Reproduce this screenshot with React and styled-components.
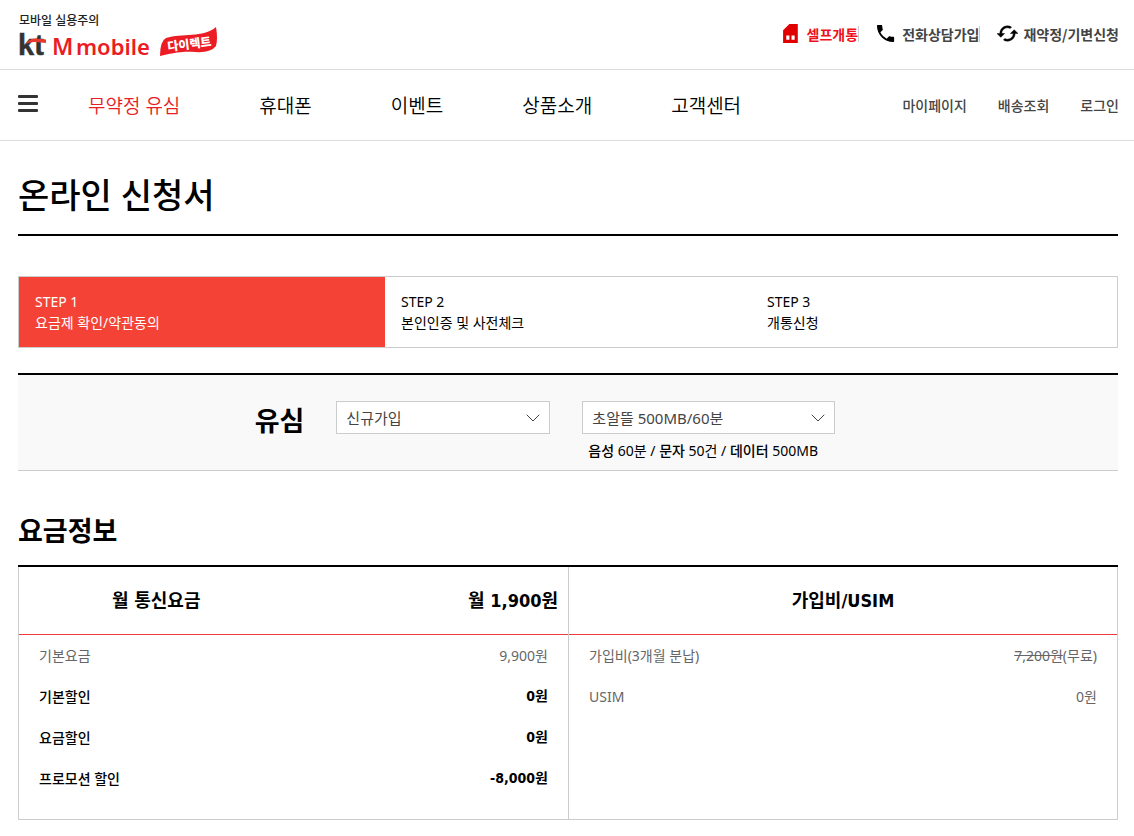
import React, { useState } from "react";
import styled, { createGlobalStyle } from "styled-components";
import { ChevronDown } from "lucide-react";
import { MdCached, MdPhone } from "react-icons/md";

const GlobalStyle = createGlobalStyle`
  * {
    box-sizing: border-box;
  }
  body {
    margin: 0;
    background: #fff;
    color: #000;
    font-family: "Noto Sans", "Noto Sans CJK KR", sans-serif;
    font-size: 14px;
    line-height: 21px;
  }
  a {
    color: inherit;
    text-decoration: none;
  }
`;

const Top = styled.div`
  display: flex;
  align-items: center;
  justify-content: space-between;
  height: 70px;
  padding: 0 15px 0 18px;
  border-bottom: 1px solid #ddd;
`;

const Logo = styled.svg`
  display: block;
  width: 202px;
  height: 60px;
  font-family: "Noto Sans", "Noto Sans CJK KR", sans-serif;
`;

const QuickLinks = styled.div`
  display: flex;
  gap: 17px;
  padding-bottom: 2px;
`;

const QuickLink = styled.a`
  display: flex;
  align-items: center;
  gap: 5px;
  color: ${(props) => (props.$red ? "#f0101c" : "#444")};
  font-family: "Noto Sans CJK KR", sans-serif;
  font-weight: 700;
  line-height: 16px;

  svg {
    width: 21px;
    height: 21px;
  }
  &:not(:last-child) span {
    border-right: 1px solid #ccc;
  }
`;

const Gnb = styled.nav`
  display: flex;
  align-items: center;
  height: 71px;
  padding: 0 15px 0 18px;
  border-bottom: 1px solid #ddd;
`;

const MenuButton = styled.button`
  display: grid;
  gap: 4px;
  width: 20px;
  margin-right: 50px;
  padding: 0 0 4px;
  border: 0;
  background: none;

  span {
    height: 3px;
    border-radius: 1px;
    background: #333;
  }
`;

const MainMenu = styled.div`
  display: flex;
  flex: 1;
  gap: 79px;
  padding-top: 2px;
  font-size: 19px;
  font-weight: 350;
  line-height: 28px;
`;

const MenuLink = styled.a`
  color: ${(props) => (props.$active ? "#e61e28" : "#000")};
`;

const UserMenu = styled.div`
  display: flex;
  gap: 31px;
  color: #444;
  font-family: "Noto Sans CJK KR", sans-serif;
  font-weight: 500;
`;

const Content = styled.main`
  padding: 32px 16px 16px 18px;
`;

const PageTitle = styled.h1`
  margin: 0 0 40px;
  padding-bottom: 17px;
  border-bottom: 2px solid #000;
  font-size: 34px;
  font-weight: 500;
  line-height: 44px;
`;

const Steps = styled.ol`
  display: grid;
  grid-template-columns: repeat(3, 1fr);
  margin: 0 0 25px;
  padding: 0;
  border: 1px solid #ccc;
  list-style: none;
`;

const Step = styled.li`
  padding: 14px 16px;
  background: ${(props) => (props.$active ? "#f44336" : "#fff")};
  color: ${(props) => (props.$active ? "#fff" : "#000")};

  span {
    display: block;
  }
`;

const PlanBar = styled.section`
  display: flex;
  justify-content: center;
  padding: 26px 46px 9px 0;
  border-top: 2px solid #000;
  border-bottom: 1px solid #ccc;
  background: #f9f9f9;
`;

const PlanTitle = styled.h2`
  margin: 0 32px 0 0;
  font-size: 27px;
  font-weight: 700;
  line-height: 40px;
`;

const SelectBox = styled.div`
  display: grid;
  align-items: center;
  width: ${(props) => props.$width};
  height: 33px;

  select,
  svg {
    grid-area: 1 / 1;
  }
  svg {
    width: 24px;
    height: 24px;
    margin-right: 5px;
    justify-self: end;
    color: #444;
    pointer-events: none;
  }
`;

const Select = styled.select`
  appearance: none;
  width: 100%;
  height: 33px;
  padding: 0 30px 0 9px;
  border: 1px solid #ccc;
  border-radius: 0;
  background: #fff;
  color: #444;
  font-family: inherit;
  font-size: 15px;
`;

const PlanChoice = styled.div`
  margin-left: 32px;
`;

const PlanSummary = styled.p`
  margin: 6px 0 0 6px;

  b {
    font-weight: 500;
  }
`;

const SectionTitle = styled.h2`
  margin: 41px 0 15px;
  font-size: 27px;
  font-weight: 700;
  line-height: 38px;
`;

const FeeGrid = styled.div`
  display: grid;
  grid-template-columns: 1fr 1fr;
  align-items: start;
  border-top: 2px solid #000;
  border-bottom: 1px solid #ccc;
  background: #fff;
`;

const FeePanel = styled.div`
  height: 100%;
  border-left: 1px solid #ccc;

  &:last-child {
    border-right: 1px solid #ccc;
  }
`;

const FeeTable = styled.table`
  width: 100%;
  margin-bottom: 20px;
  border-collapse: separate;
  border-spacing: 0;
  table-layout: fixed;
`;

const FeeHead = styled.th`
  height: 68px;
  padding: 0 10px;
  border-bottom: 1px solid #ee3b40;
  font-family: "DejaVu Sans Condensed", "Noto Sans CJK KR", sans-serif;
  font-size: 18px;
  font-weight: 700;
  text-align: ${(props) => props.$align || "center"};
`;

const FeeRow = styled.tr`
  height: 41px;
  color: ${(props) => (props.$strong ? "#000" : "#666")};

  th,
  td {
    padding: 0 20px;
    text-align: left;
    font-weight: ${(props) => (props.$strong ? 500 : 400)};
  }
  td {
    text-align: right;
    font-family: ${(props) =>
      props.$strong
        ? '"DejaVu Sans Condensed", "Noto Sans CJK KR", sans-serif'
        : "inherit"};
    font-weight: ${(props) => (props.$strong ? 700 : 400)};
  }
`;

const menus = ["무약정 유심", "휴대폰", "이벤트", "상품소개", "고객센터"];

const steps = [
  ["STEP 1", "요금제 확인/약관동의"],
  ["STEP 2", "본인인증 및 사전체크"],
  ["STEP 3", "개통신청"],
];

const monthly = [
  { name: "기본요금", price: "9,900원" },
  { name: "기본할인", price: "0원", strong: true },
  { name: "요금할인", price: "0원", strong: true },
  { name: "프로모션 할인", price: "-8,000원", strong: true },
];

function KtLogo() {
  return (
    <Logo viewBox="18 5 202 60" role="img" aria-label="kt M mobile 다이렉트">
      <text x="19" y="25" fontSize="12" fontWeight="500" fill="#222">
        모바일 실용주의
      </text>
      <text
        x="18"
        y="55"
        fontFamily="Liberation Sans"
        fontSize="29"
        fontWeight="700"
        fill="#333"
        stroke="#333"
        strokeWidth="0.5"
      >
        kt
      </text>
      <path d="M26 44Q28 39 35 38.5L46 39.5V43L36 42Q30 41.5 26 44Z" fill="#e8392f" />
      <text x="52" y="55" fontSize="23" fontWeight="600" fill="#eb1c24">
        M
      </text>
      <text x="76" y="55" fontSize="22" fontWeight="600" fill="#eb1c24">
        mobile
      </text>
      <path
        d="M160 56 Q160 41 166 38 C182 33 203 38 216 27 Q218 39 216 46 Q211 53 195 52 C180 51 170 54 160 56Z"
        fill="#eb1c24"
      />
      <text
        x="168"
        y="51"
        fontSize="12"
        fontWeight="800"
        fill="#fff"
        transform="rotate(-7 168 51)"
      >
        다이렉트
      </text>
    </Logo>
  );
}

function UsimIcon() {
  return (
    <svg viewBox="0 0 20 20" aria-hidden="true">
      <path
        fillRule="evenodd"
        fill="#e00000"
        d="M2 7 8 1h8v18H2ZM5 12v4h3v-4Zm5 0v4h3v-4Z"
      />
    </svg>
  );
}

export default function App() {
  const [joinType, setJoinType] = useState("신규가입");
  const [plan, setPlan] = useState("초알뜰 500MB/60분");

  return (
    <>
      <GlobalStyle />
      <header>
        <Top>
          <a href="#home">
            <KtLogo />
          </a>
          <QuickLinks>
            <QuickLink href="#self" $red>
              <UsimIcon />
              <span>셀프개통</span>
            </QuickLink>
            <QuickLink href="#call">
              <MdPhone color="#000" viewBox="2 1 22 22" />
              <span>전화상담가입</span>
            </QuickLink>
            <QuickLink href="#renew">
              <MdCached
                color="#000"
                stroke="#000"
                strokeWidth="0.5"
                viewBox="1 1 22 22"
              />
              <span>재약정/기변신청</span>
            </QuickLink>
          </QuickLinks>
        </Top>
        <Gnb>
          <MenuButton type="button" aria-label="전체메뉴">
            <span />
            <span />
            <span />
          </MenuButton>
          <MainMenu>
            {menus.map((menu, i) => (
              <MenuLink key={menu} href="#menu" $active={i === 0}>
                {menu}
              </MenuLink>
            ))}
          </MainMenu>
          <UserMenu>
            <a href="#mypage">마이페이지</a>
            <a href="#delivery">배송조회</a>
            <a href="#login">로그인</a>
          </UserMenu>
        </Gnb>
      </header>

      <Content>
        <PageTitle>온라인 신청서</PageTitle>
        <Steps>
          {steps.map(([step, name], i) => (
            <Step key={step} $active={i === 0}>
              <span>{step}</span>
              <span>{name}</span>
            </Step>
          ))}
        </Steps>

        <PlanBar>
          <PlanTitle>유심</PlanTitle>
          <SelectBox $width="214px">
            <Select
              aria-label="가입유형"
              value={joinType}
              onChange={(e) => setJoinType(e.target.value)}
            >
              <option>신규가입</option>
            </Select>
            <ChevronDown strokeWidth={1} />
          </SelectBox>
          <PlanChoice>
            <SelectBox $width="253px">
              <Select
                aria-label="요금제"
                value={plan}
                onChange={(e) => setPlan(e.target.value)}
              >
                <option>초알뜰 500MB/60분</option>
              </Select>
              <ChevronDown strokeWidth={1} />
            </SelectBox>
            <PlanSummary>
              <b>음성</b> 60분 / <b>문자</b> 50건 / <b>데이터</b> 500MB
            </PlanSummary>
          </PlanChoice>
        </PlanBar>

        <SectionTitle>요금정보</SectionTitle>
        <FeeGrid>
          <FeePanel>
            <FeeTable>
              <thead>
                <tr>
                  <FeeHead>월 통신요금</FeeHead>
                  <FeeHead $align="right">월 1,900원</FeeHead>
                </tr>
              </thead>
              <tbody>
                {monthly.map((row) => (
                  <FeeRow key={row.name} $strong={row.strong}>
                    <th scope="row">{row.name}</th>
                    <td>{row.price}</td>
                  </FeeRow>
                ))}
              </tbody>
            </FeeTable>
          </FeePanel>
          <FeePanel>
            <FeeTable>
              <thead>
                <tr>
                  <FeeHead colSpan={2}>가입비/USIM</FeeHead>
                </tr>
              </thead>
              <tbody>
                <FeeRow>
                  <th scope="row">가입비(3개월 분납)</th>
                  <td>
                    <del>7,200원</del>(무료)
                  </td>
                </FeeRow>
                <FeeRow>
                  <th scope="row">USIM</th>
                  <td>0원</td>
                </FeeRow>
              </tbody>
            </FeeTable>
          </FeePanel>
        </FeeGrid>
      </Content>
    </>
  );
}
